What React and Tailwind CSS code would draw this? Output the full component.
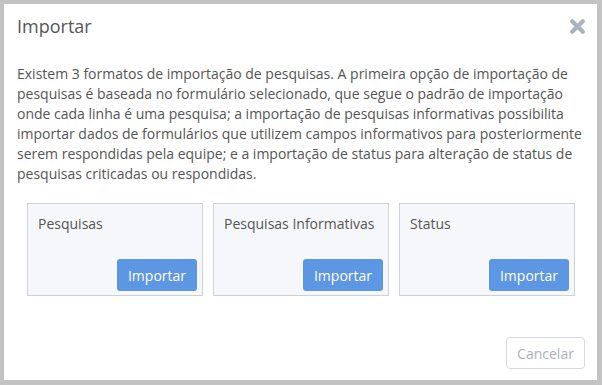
import React from 'react';

const CARDS = ['Pesquisas', 'Pesquisas Informativas', 'Status'];

function CloseIcon() {
  return (
    <svg width="17" height="17" viewBox="0 0 16 16" className="text-[#aab2bd]">
      <path d="M3 3 L13 13 M13 3 L3 13" stroke="currentColor" strokeWidth="4" strokeLinecap="round" />
    </svg>
  );
}

export default function App() {
  return (
    <div
      className="w-[602px] h-[385px] bg-[#c3c3c3] pt-[4px] pl-[4px] pr-[5px] pb-[5px]"
      style={{ fontFamily: '"Open Sans", sans-serif' }}
    >
      <div className="h-full bg-white flex flex-col">
        {/* Header */}
        <div className="flex items-center justify-between pl-[13px] pr-[11px] h-[44px] pt-[1px]">
          <h3 className="text-[18px] text-[#555] font-normal">Importar</h3>
          <button className="flex items-center justify-center">
            <CloseIcon />
          </button>
        </div>

        {/* Body */}
        <div className="px-[13px] pt-[16px]">
          <p className="text-[14px] leading-[20px] text-[#555]">
            Existem 3 formatos de importação de pesquisas. A primeira opção de importação de pesquisas é baseada no
            formulário selecionado, que segue o padrão de importação onde cada linha é uma pesquisa; a importação de
            pesquisas informativas possibilita importar dados de formulários que utilizem campos informativos para
            posteriormente serem respondidas pela equipe; e a importação de status para alteração de status de
            pesquisas criticadas ou respondidas.
          </p>

          <div className="flex gap-[10px] pl-[10px] mt-[19px]">
            {CARDS.map((title) => (
              <div
                key={title}
                className="w-[176px] h-[93px] bg-[#f5f7fa] border border-[#ccd1d9] flex flex-col justify-between pl-[10px] pr-[5px] pt-[9px] pb-[4px]"
              >
                <span className="text-[14px] text-[#555]">{title}</span>
                <div className="flex justify-end">
                  <button className="w-[80px] h-[32px] rounded-[3px] bg-[#5d96e2] text-white text-[14px]">
                    Importar
                  </button>
                </div>
              </div>
            ))}
          </div>
        </div>

        {/* Footer */}
        <div className="mt-auto flex justify-end pr-[12px] pb-[11px]">
          <button className="w-[79px] h-[32px] rounded-[4px] bg-white border border-[#d5dae0] text-[14px] text-[#aab2bd]">
            Cancelar
          </button>
        </div>
      </div>
    </div>
  );
}
